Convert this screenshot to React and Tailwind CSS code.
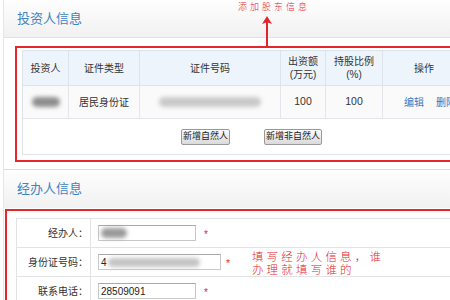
import React from 'react';

const Blur = ({ className }) => <div className={`rounded-full blur-[2px] ${className}`} />;

const InvestorTable = () => (
  <div className="border border-[#dde3ea] bg-white text-[10px] text-[#333]">
    <div className="grid grid-cols-[46px_71px_141px_45px_57px_82px] h-[35px] bg-[#edf4fb] border-b border-[#dde3ea] leading-[13px]">
      <div className="flex items-center justify-center border-r border-[#dde3ea]">投资人</div>
      <div className="flex items-center justify-center border-r border-[#dde3ea]">证件类型</div>
      <div className="flex items-center justify-center border-r border-[#dde3ea]">证件号码</div>
      <div className="flex flex-col items-center justify-center border-r border-[#dde3ea]">
        <span>出资额</span>
        <span>(万元)</span>
      </div>
      <div className="flex flex-col items-center justify-center border-r border-[#dde3ea]">
        <span>持股比例</span>
        <span>(%)</span>
      </div>
      <div className="flex items-center justify-center">操作</div>
    </div>
    <div className="grid grid-cols-[46px_71px_141px_45px_57px_82px] h-[33px] bg-[#fafafa] border-b border-[#e3e6ea]">
      <div className="flex items-center justify-center border-r border-[#e3e6ea]">
        <Blur className="w-[28px] h-[10px] bg-[#8e8e8e]" />
      </div>
      <div className="flex items-center justify-center border-r border-[#e3e6ea]">居民身份证</div>
      <div className="flex items-center justify-center border-r border-[#e3e6ea]">
        <Blur className="w-[102px] h-[10px] bg-[#c9c9c9]" />
      </div>
      <div className="flex items-center justify-center border-r border-[#e3e6ea] text-[10.5px]">100</div>
      <div className="flex items-center justify-center border-r border-[#e3e6ea] text-[10.5px]">100</div>
      <div className="flex items-center pl-[21px] gap-[12px] text-[#2f7cc4]">
        <span>编辑</span>
        <span>删除</span>
      </div>
    </div>
    <div className="h-[35px] flex items-center pl-[158px] gap-[34px]">
      <button className="h-[16px] px-[1px] text-[9px] leading-none text-[#222] border border-[#999] rounded-[2px] bg-gradient-to-b from-[#fbfbfb] to-[#dadada]">
        新增自然人
      </button>
      <button className="h-[16px] px-[1px] text-[9px] leading-none text-[#222] border border-[#999] rounded-[2px] bg-gradient-to-b from-[#fbfbfb] to-[#dadada]">
        新增非自然人
      </button>
    </div>
  </div>
);

const Input = ({ width, children }) => (
  <div className={`${width} h-[16px] border border-[#c8c8c8] border-t-[#a9a9a9] bg-white flex items-center pl-[2px] text-[10px] text-[#222]`}>
    {children}
  </div>
);

const Star = () => <span className="text-[#e3242b] text-[10px] leading-none">*</span>;

const HandlerRow = ({ label, children }) => (
  <div className="flex h-[29px] border-b border-[#e3e3e3]">
    <div className="w-[74px] shrink-0 border-r border-[#e3e3e3] flex items-center justify-end pr-[2px] text-[10px] text-[#333]">
      {label}
    </div>
    <div className="flex items-center pl-[7px]">{children}</div>
  </div>
);

export default function App() {
  return (
    <div className="relative w-[450px] h-[300px] overflow-hidden bg-white font-['Liberation_Sans','Noto_Sans_CJK_SC',sans-serif]">
      <div className="ml-[3px] h-full border-l border-[#e6e6e6]">
        <div className="h-[38px] bg-gradient-to-b from-[#fefefe] to-[#f1f1f1] border-b border-[#e2e2e2] flex items-center pl-[13px]">
          <span className="text-[13px] text-[#3d85c6]">投资人信息</span>
        </div>

        <div className="mt-[8px] ml-[11px] w-[470px] border-2 border-[#e5262d] pt-[2px] pl-[5px] pb-[5px]">
          <InvestorTable />
        </div>

        <div className="mt-[7px] h-[39px] border-t border-[#dcdcdc] bg-gradient-to-b from-[#fefefe] to-[#f1f1f1] flex items-center pl-[13px]">
          <span className="text-[13px] text-[#3d85c6]">经办人信息</span>
        </div>

        <div className="mt-[1px] ml-[1px] w-[480px] border-2 border-[#e5262d] pt-[7px] pl-[9px] h-[120px]">
          <div className="border-t border-l border-[#e3e3e3] bg-white">
            <HandlerRow label="经办人：">
              <Input width="w-[98px]">
                <Blur className="w-[26px] h-[10px] bg-[#9a9a9a]" />
              </Input>
              <span className="ml-[8px]"><Star /></span>
            </HandlerRow>
            <HandlerRow label="身份证号码：">
              <Input width="w-[123px]">
                <span>4</span>
                <Blur className="ml-[1px] w-[92px] h-[9px] bg-[#c4c4c4]" />
              </Input>
              <span className="ml-[5px]"><Star /></span>
              <div className="ml-[22px] self-start pt-[3px] text-[11.5px] leading-[13px] tracking-[3.2px] text-[#e3242b] font-light">
                <div>填写经办人信息，谁</div>
                <div>办理就填写谁的</div>
              </div>
            </HandlerRow>
            <HandlerRow label="联系电话：">
              <Input width="w-[98px]">28509091</Input>
              <span className="ml-[8px]"><Star /></span>
            </HandlerRow>
          </div>
        </div>
      </div>

      <div className="absolute left-[238px] top-[1px] text-[9px] leading-[12px] tracking-[3px] text-[#e3242b] font-light">
        添加股东信息
      </div>
      <svg className="absolute left-[261px] top-[15px]" width="12" height="33" viewBox="0 0 12 33">
        <path d="M6 1 L11 9 L6.9 7.5 L5.1 7.5 L1 9 Z" fill="#e3242b" />
        <rect x="5" y="6" width="2" height="27" fill="#e3242b" />
      </svg>
    </div>
  );
}
